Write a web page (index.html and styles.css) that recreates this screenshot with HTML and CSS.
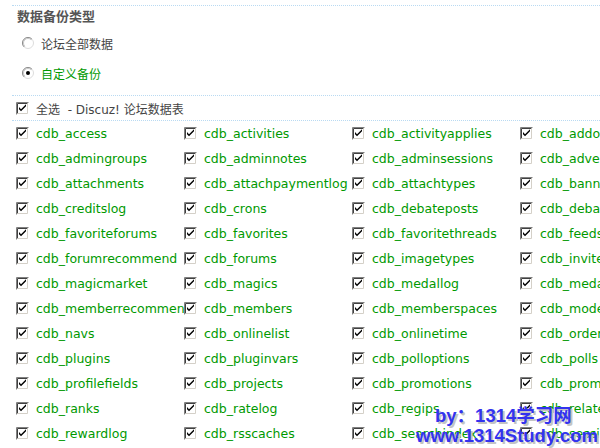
FILE: index.html
```html
<!DOCTYPE html>
<html lang="zh-CN">
<head>
  <meta charset="UTF-8">
  <title>数据备份</title>
  <link rel="stylesheet" href="styles.css">
</head>
<body>
  <svg class="defs" width="0" height="0">
    <symbol id="cb" viewBox="0 0 13 13">
      <rect x="0" y="0" width="13" height="13" fill="#fff"/>
      <path d="M0.5 12.5V0.5H12.5" fill="none" stroke="#808080"/>
      <path d="M1.5 11.5V1.5H11.5" fill="none" stroke="#404040"/>
      <path d="M1.5 11.5H11.5V1.5" fill="none" stroke="#d4d0c8"/>
      <path d="M3 5v2.2l2 2 5-5V2.2l-5 5z" fill="#000"/>
    </symbol>
    <symbol id="radio" viewBox="0 0 12 12">
      <circle cx="6" cy="6" r="5.5" fill="#fff" stroke="#dcdcdc"/>
      <path d="M2.1 9.9A5.5 5.5 0 0 1 9.9 2.1" fill="none" stroke="#8a8a8a"/>
      <path d="M2.8 9.2A4.5 4.5 0 0 1 9.2 2.8" fill="none" stroke="#c8c8c8"/>
    </symbol>
  </svg>

  <div class="panel">
    <h3 class="title">数据备份类型</h3>
    <ul class="types">
      <li><svg class="radio"><use href="#radio"/></svg><span>论坛全部数据</span></li>
      <li class="on"><svg class="radio"><use href="#radio"/></svg><i class="dot"></i><span>自定义备份</span></li>
    </ul>

    <div class="checkall">
      <svg class="cb"><use href="#cb"/></svg><span>全选 &nbsp;- Discuz! 论坛数据表</span>
    </div>

    <div class="tables">
      <label><svg class="cb"><use href="#cb"/></svg>cdb_access</label>
      <label><svg class="cb"><use href="#cb"/></svg>cdb_activities</label>
      <label><svg class="cb"><use href="#cb"/></svg>cdb_activityapplies</label>
      <label><svg class="cb"><use href="#cb"/></svg>cdb_addons</label>

      <label><svg class="cb"><use href="#cb"/></svg>cdb_admingroups</label>
      <label><svg class="cb"><use href="#cb"/></svg>cdb_adminnotes</label>
      <label><svg class="cb"><use href="#cb"/></svg>cdb_adminsessions</label>
      <label><svg class="cb"><use href="#cb"/></svg>cdb_advertisements</label>

      <label><svg class="cb"><use href="#cb"/></svg>cdb_attachments</label>
      <label><svg class="cb"><use href="#cb"/></svg>cdb_attachpaymentlog</label>
      <label><svg class="cb"><use href="#cb"/></svg>cdb_attachtypes</label>
      <label><svg class="cb"><use href="#cb"/></svg>cdb_banned</label>

      <label><svg class="cb"><use href="#cb"/></svg>cdb_creditslog</label>
      <label><svg class="cb"><use href="#cb"/></svg>cdb_crons</label>
      <label><svg class="cb"><use href="#cb"/></svg>cdb_debateposts</label>
      <label><svg class="cb"><use href="#cb"/></svg>cdb_debates</label>

      <label><svg class="cb"><use href="#cb"/></svg>cdb_favoriteforums</label>
      <label><svg class="cb"><use href="#cb"/></svg>cdb_favorites</label>
      <label><svg class="cb"><use href="#cb"/></svg>cdb_favoritethreads</label>
      <label><svg class="cb"><use href="#cb"/></svg>cdb_feeds</label>

      <label><svg class="cb"><use href="#cb"/></svg>cdb_forumrecommend</label>
      <label><svg class="cb"><use href="#cb"/></svg>cdb_forums</label>
      <label><svg class="cb"><use href="#cb"/></svg>cdb_imagetypes</label>
      <label><svg class="cb"><use href="#cb"/></svg>cdb_invites</label>

      <label><svg class="cb"><use href="#cb"/></svg>cdb_magicmarket</label>
      <label><svg class="cb"><use href="#cb"/></svg>cdb_magics</label>
      <label><svg class="cb"><use href="#cb"/></svg>cdb_medallog</label>
      <label><svg class="cb"><use href="#cb"/></svg>cdb_medals</label>

      <label><svg class="cb"><use href="#cb"/></svg>cdb_memberrecommend</label>
      <label><svg class="cb"><use href="#cb"/></svg>cdb_members</label>
      <label><svg class="cb"><use href="#cb"/></svg>cdb_memberspaces</label>
      <label><svg class="cb"><use href="#cb"/></svg>cdb_moderators</label>

      <label><svg class="cb"><use href="#cb"/></svg>cdb_navs</label>
      <label><svg class="cb"><use href="#cb"/></svg>cdb_onlinelist</label>
      <label><svg class="cb"><use href="#cb"/></svg>cdb_onlinetime</label>
      <label><svg class="cb"><use href="#cb"/></svg>cdb_orders</label>

      <label><svg class="cb"><use href="#cb"/></svg>cdb_plugins</label>
      <label><svg class="cb"><use href="#cb"/></svg>cdb_pluginvars</label>
      <label><svg class="cb"><use href="#cb"/></svg>cdb_polloptions</label>
      <label><svg class="cb"><use href="#cb"/></svg>cdb_polls</label>

      <label><svg class="cb"><use href="#cb"/></svg>cdb_profilefields</label>
      <label><svg class="cb"><use href="#cb"/></svg>cdb_projects</label>
      <label><svg class="cb"><use href="#cb"/></svg>cdb_promotions</label>
      <label><svg class="cb"><use href="#cb"/></svg>cdb_promptmsgs</label>

      <label><svg class="cb"><use href="#cb"/></svg>cdb_ranks</label>
      <label><svg class="cb"><use href="#cb"/></svg>cdb_ratelog</label>
      <label><svg class="cb"><use href="#cb"/></svg>cdb_regips</label>
      <label><svg class="cb"><use href="#cb"/></svg>cdb_relatedthreads</label>

      <label><svg class="cb"><use href="#cb"/></svg>cdb_rewardlog</label>
      <label><svg class="cb"><use href="#cb"/></svg>cdb_rsscaches</label>
      <label><svg class="cb"><use href="#cb"/></svg>cdb_searchindex</label>
      <label><svg class="cb"><use href="#cb"/></svg>cdb_sessions</label>
    </div>
  </div>

  <div class="watermark">
    <div class="wm-by">by：1314学习网</div>
    <div class="wm-url">www.1314Study.com</div>
  </div>
</body>
</html>
```

FILE: styles.css
```css
html, body {
  overflow: hidden;
}
body {
  margin: 0;
  width: 600px;
  height: 448px;
  background: #fff;
  color: #444;
  font-family: "DejaVu Sans", "Noto Sans CJK SC", sans-serif;
  font-size: 12.5px;
  position: relative;
}
.defs {
  position: absolute;
  width: 0;
  height: 0;
}
.panel {
  margin: 5px 0 0 12px;
  border-top: 1px dotted #b9daf2;
}
.title {
  margin: 0;
  padding-left: 5px;
  height: 20px;
  line-height: 20px;
  font-size: 13px;
  font-weight: bold;
  color: #555;
  font-family: "Noto Sans CJK SC", sans-serif;
}
.types {
  list-style: none;
  margin: 0;
  padding: 2px 0 7px 10px;
  border-bottom: 1px dotted #b9daf2;
}
.types li {
  display: flex;
  align-items: center;
  height: 30px;
  position: relative;
  font-family: "Noto Sans CJK SC", sans-serif;
  font-size: 12px;
}
.types li span {
  margin-left: 7px;
}
.types li.on {
  color: #090;
}
.radio {
  width: 12px;
  height: 12px;
}
.dot {
  position: absolute;
  left: 4px;
  top: 13px;
  width: 4px;
  height: 4px;
  border-radius: 50%;
  background: #000;
}
.checkall {
  display: flex;
  align-items: center;
  height: 24px;
  padding-left: 4px;
  border-bottom: 1px dotted #b9daf2;
  font-size: 12px;
}
.checkall span {
  margin-left: 7px;
}
.cb {
  flex: none;
  width: 13px;
  height: 13px;
}
.tables {
  display: grid;
  grid-template-columns: repeat(4, 168px);
  grid-auto-rows: 25px;
  padding-left: 4px;
  width: 672px;
}
.tables label {
  display: flex;
  align-items: center;
  gap: 7px;
  overflow: hidden;
  white-space: nowrap;
  color: #090;
}
.watermark {
  position: absolute;
  right: 2px;
  bottom: 2px;
  font-family: "Liberation Sans", "Noto Sans CJK SC", sans-serif;
  font-weight: bold;
  font-size: 18.5px;
  line-height: 20px;
  color: #3333ee;
  text-shadow: 2px 2px 0 #c4c4c4;
}
.wm-by {
  padding-left: 19px;
}
```
